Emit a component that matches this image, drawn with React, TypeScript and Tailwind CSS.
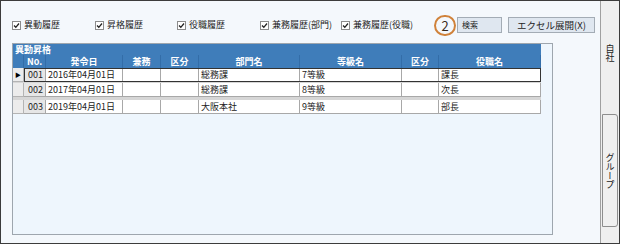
const FONT = { fontFamily: '"Noto Sans CJK JP", "Liberation Sans", sans-serif' };

const FILTERS = [
  { label: '異動履歴', w: 'w-[83px]' },
  { label: '昇格履歴', w: 'w-[82px]' },
  { label: '役職履歴', w: 'w-[83px]' },
  { label: '兼務履歴(部門)', w: 'w-[81px]' },
  { label: '兼務履歴(役職)', w: 'w-[93px]' },
];

const COLS = [
  { label: 'No.', w: 'w-[22px]' },
  { label: '発令日', w: 'w-[77px]' },
  { label: '兼務', w: 'w-[38px]' },
  { label: '区分', w: 'w-[38px]' },
  { label: '部門名', w: 'w-[101px]' },
  { label: '等級名', w: 'w-[102px]' },
  { label: '区分', w: 'w-[37px]' },
  { label: '役職名', w: 'w-[102px]' },
];

const ROWS = [
  ['001', '2016年04月01日', '', '', '総務課', '7等級', '', '課長'],
  ['002', '2017年04月01日', '', '', '総務課', '8等級', '', '次長'],
  ['003', '2019年04月01日', '', '', '大阪本社', '9等級', '', '部長'],
];

function Check({ label, w }: { label: string; w: string }) {
  return (
    <div className={`${w} flex items-center shrink-0`}>
      <span className="w-[9px] h-[9px] border border-[#8c8c8c] bg-white flex items-center justify-center">
        <svg width="7" height="7" viewBox="0 0 7 7">
          <path d="M1 3.5 L2.8 5.3 L6 1.5" stroke="#222" strokeWidth="1.3" fill="none" />
        </svg>
      </span>
      <span className="ml-[3px] text-[9px] text-[#222] whitespace-nowrap">{label}</span>
    </div>
  );
}

function DataRow({ row, selected, last }: { row: string[]; selected: boolean; last: boolean }) {
  return (
    <div className={`flex h-[14px] ${last ? 'mt-[2px]' : ''}`}>
      <div className="w-[11px] bg-[#ececec] border-r border-b border-[#b4b4b4] flex items-center justify-center">
        {selected && <span className="text-[6px] leading-none text-black">▶</span>}
      </div>
      <div className={`flex ${selected ? 'outline outline-1 outline-[#333] -outline-offset-1' : ''}`}>
        {row.map((cell, i) => (
          <div
            key={i}
            className={`${COLS[i].w} ${i === 0 ? 'bg-[#e6e6e6] pl-[4px]' : 'bg-white pl-[2px]'} border-r border-b border-[#a8a8a8] text-[9px] leading-[13px] text-[#222] whitespace-nowrap overflow-hidden`}
          >
            {cell}
          </div>
        ))}
      </div>
    </div>
  );
}

export default function App() {
  return (
    <div style={FONT} className="w-[620px] h-[244px] border border-[#3c3c3c] flex bg-[#f4f8fc]">
      <div className="flex-1 flex flex-col pl-[11px] pt-[16px]">
        <div className="flex items-center h-[16px]">
          {FILTERS.map((f) => (
            <Check key={f.label} label={f.label} w={f.w} />
          ))}
          <div className="w-[22px] h-[21px] rounded-full border-2 border-[#d0823a] flex items-center justify-center text-[13px] leading-none text-[#3a2a1a] shrink-0">
            2
          </div>
          <button className="ml-[1px] w-[45px] h-[16px] border border-[#a3acb5] bg-[#dfe7f0] text-[8px] text-[#222] text-left pl-[4px]">
            検索
          </button>
          <button className="ml-[6px] w-[87px] h-[16px] border border-[#a3acb5] bg-[#dfe7f0] text-[9.5px] text-[#222]">
            エクセル展開(X)
          </button>
        </div>

        <div className="mt-[10px] w-[541px] h-[192px] border border-[#9ea6ae] bg-[#eef6fd]">
          <div className="w-[528px] bg-[#3f7dba] text-white font-bold">
            <div className="h-[11px] text-[9px] leading-[11px] pl-[2px]">異動昇格</div>
            <div className="flex h-[13px]">
              <div className="w-[11px] border-r border-[#336da8]" />
              {COLS.map((c, i) => (
                <div
                  key={i}
                  className={`${c.w} border-r border-[#336da8] text-[9px] leading-[13px] text-center`}
                >
                  {c.label}
                </div>
              ))}
            </div>
          </div>
          <div className="w-[528px] bg-[#d6d6d6] flex flex-col gap-[1px]">
            {ROWS.map((r, i) => (
              <DataRow key={i} row={r} selected={i === 0} last={i === ROWS.length - 1} />
            ))}
          </div>
        </div>
      </div>

      <div className="w-[19px] border-l border-[#a0a0a0] bg-[#efefef] flex flex-col">
        <div className="h-[113px] pt-[43px] flex justify-center">
          <span className="[writing-mode:vertical-rl] text-[9px] text-[#222] leading-none">自社</span>
        </div>
        <div className="ml-[1px] w-[16px] h-[113px] border border-[#8e8e8e] rounded-r-[3px] bg-[#f0f0f0] flex items-center justify-center">
          <span className="[writing-mode:vertical-rl] text-[9px] text-[#222] leading-none">グループ</span>
        </div>
      </div>
    </div>
  );
}
